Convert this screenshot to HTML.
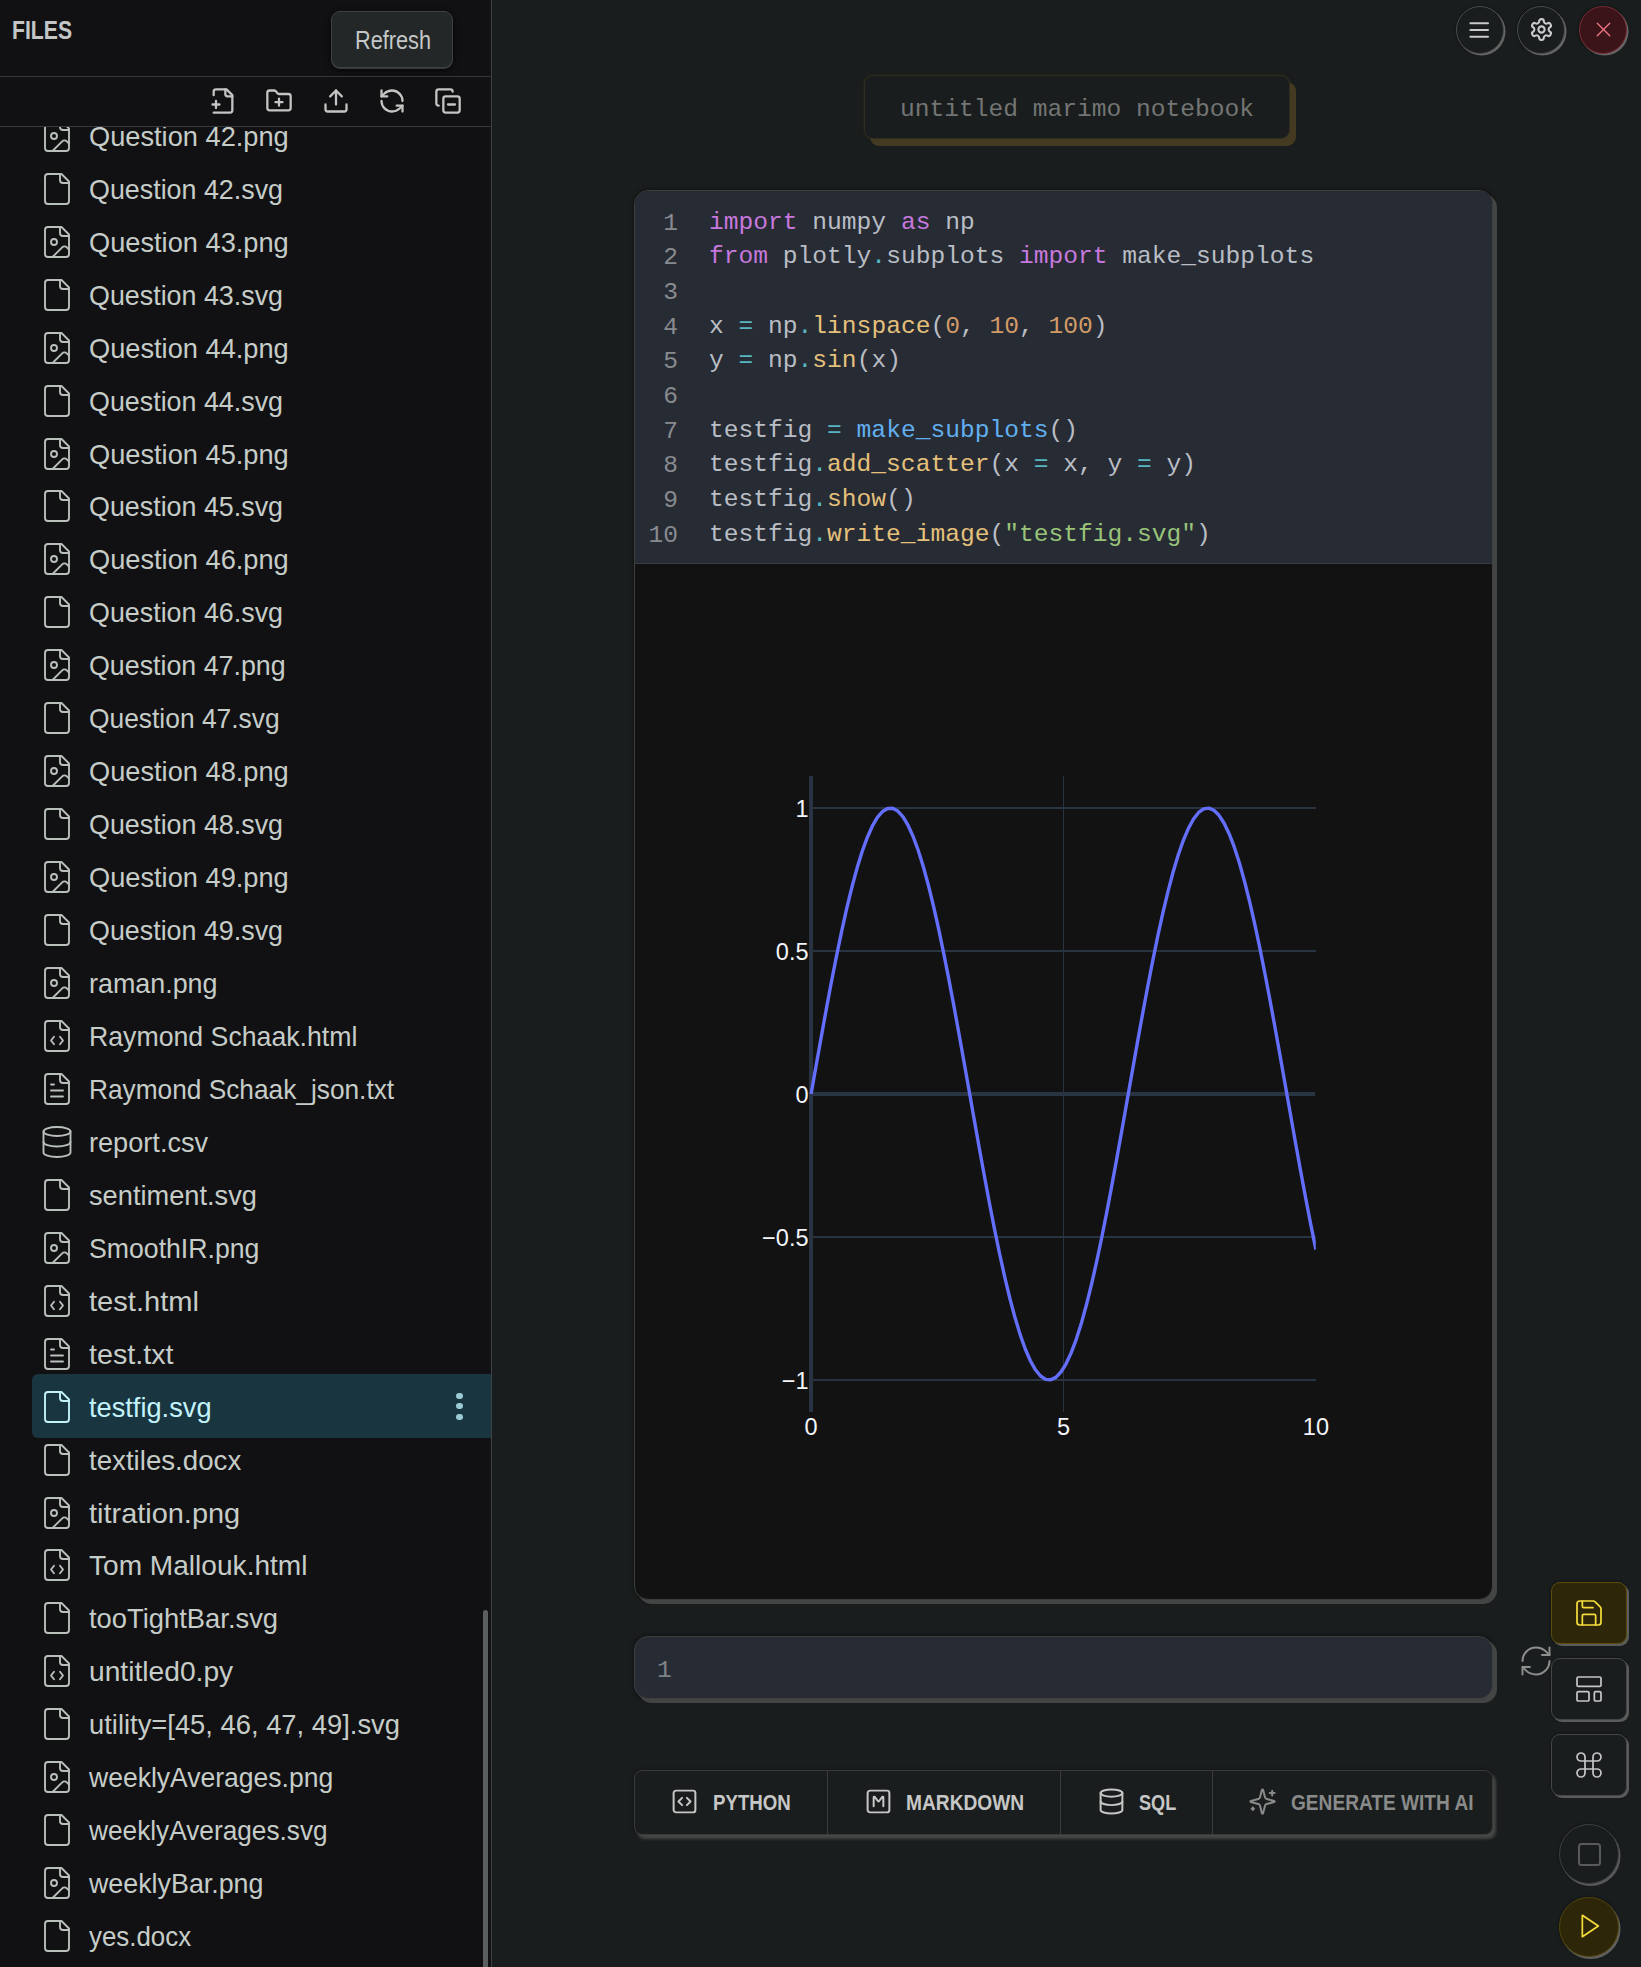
<!DOCTYPE html>
<html><head><meta charset="utf-8"><title>marimo</title>
<style>
html,body{margin:0;padding:0;width:1641px;height:1967px;overflow:hidden;background:#1a1d1d;font-family:"Liberation Sans", sans-serif;}
.a{position:absolute;}
svg{position:absolute;overflow:visible;}
.ic{fill:none;stroke-linecap:round;stroke-linejoin:round;}
.fn{position:absolute;left:89px;white-space:nowrap;font-size:28px;color:#c8c9c6;transform-origin:0 50%;transform:scaleX(.945);height:40px;line-height:40px;}
.mono{font-family:"Liberation Mono", monospace;}
</style></head><body>

<div class="a" style="left:0;top:0;width:491px;height:1967px;background:#111113;border-right:1px solid #3f4244;"></div>
<div class="a" style="left:12px;top:12px;height:36px;line-height:36px;font-size:26px;font-weight:bold;color:#c4c5c7;transform-origin:0 50%;transform:scaleX(.815);">FILES</div>
<div class="a" style="left:0;top:76px;width:491px;height:1px;background:#35393a;"></div>
<div class="a" style="left:0;top:126px;width:491px;height:1px;background:#35393a;"></div>
<svg class="ic" style="left:209.4px;top:86.6px" width="28" height="28" viewBox="0 0 24 24" stroke="#c4c5c3" stroke-width="1.95"><path d="M4 22h14a2 2 0 0 0 2-2V7l-5-5H6a2 2 0 0 0-2 2v3"/><path d="M14 2v4a2 2 0 0 0 2 2h4"/><path d="M3 15h6"/><path d="M6 12v6"/></svg>
<svg class="ic" style="left:265.4px;top:86.6px" width="28" height="28" viewBox="0 0 24 24" stroke="#c4c5c3" stroke-width="1.95"><path d="M12 10v6"/><path d="M9 13h6"/><path d="M20 20a2 2 0 0 0 2-2V8a2 2 0 0 0-2-2h-7.9a2 2 0 0 1-1.69-.9L9.6 3.9A2 2 0 0 0 7.93 3H4a2 2 0 0 0-2 2v13a2 2 0 0 0 2 2Z"/></svg>
<svg class="ic" style="left:322.4px;top:86.6px" width="28" height="28" viewBox="0 0 24 24" stroke="#c4c5c3" stroke-width="1.95"><path d="M21 15v4a2 2 0 0 1-2 2H5a2 2 0 0 1-2-2v-4"/><polyline points="17 8 12 3 7 8"/><line x1="12" x2="12" y1="3" y2="15"/></svg>
<svg class="ic" style="left:378.4px;top:86.6px" width="28" height="28" viewBox="0 0 24 24" stroke="#c4c5c3" stroke-width="1.95"><path d="M21 12a9 9 0 0 0-9-9 9.75 9.75 0 0 0-6.74 2.74L3 8"/><path d="M3 3v5h5"/><path d="M3 12a9 9 0 0 0 9 9 9.75 9.75 0 0 0 6.74-2.74L21 16"/><path d="M16 16h5v5"/></svg>
<svg class="ic" style="left:434.4px;top:86.6px" width="28" height="28" viewBox="0 0 24 24" stroke="#c4c5c3" stroke-width="1.95"><line x1="12" x2="18" y1="15" y2="15"/><rect width="14" height="14" x="8" y="8" rx="2" ry="2"/><path d="M4 16c-1.1 0-2-.9-2-2V4c0-1.1.9-2 2-2h10c1.1 0 2 .9 2 2"/></svg>
<div class="a" style="left:0;top:127px;width:491px;height:1840px;overflow:hidden;">
<svg class="ic" style="left:38.75px;top:-9.20px" width="36" height="36" viewBox="0 0 24 24" stroke="#b9c0bc" stroke-width="1.25"><path d="M15 2H6a2 2 0 0 0-2 2v16a2 2 0 0 0 2 2h12a2 2 0 0 0 2-2V7Z"/><path d="M14 2v4a2 2 0 0 0 2 2h4"/><circle cx="10" cy="12" r="2"/><path d="m20 17-1.296-1.296a2.41 2.41 0 0 0-3.408 0L9 22"/></svg>
<div class="fn" style="top:-10.20px;color:#c6ccc8;transform:scaleX(0.972)">Question 42.png</div>
<svg class="ic" style="left:38.75px;top:43.75px" width="36" height="36" viewBox="0 0 24 24" stroke="#b9c0bc" stroke-width="1.25"><path d="M15 2H6a2 2 0 0 0-2 2v16a2 2 0 0 0 2 2h12a2 2 0 0 0 2-2V7Z"/><path d="M14 2v4a2 2 0 0 0 2 2h4"/></svg>
<div class="fn" style="top:42.75px;color:#c6ccc8;transform:scaleX(0.959)">Question 42.svg</div>
<svg class="ic" style="left:38.75px;top:96.70px" width="36" height="36" viewBox="0 0 24 24" stroke="#b9c0bc" stroke-width="1.25"><path d="M15 2H6a2 2 0 0 0-2 2v16a2 2 0 0 0 2 2h12a2 2 0 0 0 2-2V7Z"/><path d="M14 2v4a2 2 0 0 0 2 2h4"/><circle cx="10" cy="12" r="2"/><path d="m20 17-1.296-1.296a2.41 2.41 0 0 0-3.408 0L9 22"/></svg>
<div class="fn" style="top:95.70px;color:#c6ccc8;transform:scaleX(0.972)">Question 43.png</div>
<svg class="ic" style="left:38.75px;top:149.65px" width="36" height="36" viewBox="0 0 24 24" stroke="#b9c0bc" stroke-width="1.25"><path d="M15 2H6a2 2 0 0 0-2 2v16a2 2 0 0 0 2 2h12a2 2 0 0 0 2-2V7Z"/><path d="M14 2v4a2 2 0 0 0 2 2h4"/></svg>
<div class="fn" style="top:148.65px;color:#c6ccc8;transform:scaleX(0.959)">Question 43.svg</div>
<svg class="ic" style="left:38.75px;top:202.60px" width="36" height="36" viewBox="0 0 24 24" stroke="#b9c0bc" stroke-width="1.25"><path d="M15 2H6a2 2 0 0 0-2 2v16a2 2 0 0 0 2 2h12a2 2 0 0 0 2-2V7Z"/><path d="M14 2v4a2 2 0 0 0 2 2h4"/><circle cx="10" cy="12" r="2"/><path d="m20 17-1.296-1.296a2.41 2.41 0 0 0-3.408 0L9 22"/></svg>
<div class="fn" style="top:201.60px;color:#c6ccc8;transform:scaleX(0.972)">Question 44.png</div>
<svg class="ic" style="left:38.75px;top:255.55px" width="36" height="36" viewBox="0 0 24 24" stroke="#b9c0bc" stroke-width="1.25"><path d="M15 2H6a2 2 0 0 0-2 2v16a2 2 0 0 0 2 2h12a2 2 0 0 0 2-2V7Z"/><path d="M14 2v4a2 2 0 0 0 2 2h4"/></svg>
<div class="fn" style="top:254.55px;color:#c6ccc8;transform:scaleX(0.959)">Question 44.svg</div>
<svg class="ic" style="left:38.75px;top:308.50px" width="36" height="36" viewBox="0 0 24 24" stroke="#b9c0bc" stroke-width="1.25"><path d="M15 2H6a2 2 0 0 0-2 2v16a2 2 0 0 0 2 2h12a2 2 0 0 0 2-2V7Z"/><path d="M14 2v4a2 2 0 0 0 2 2h4"/><circle cx="10" cy="12" r="2"/><path d="m20 17-1.296-1.296a2.41 2.41 0 0 0-3.408 0L9 22"/></svg>
<div class="fn" style="top:307.50px;color:#c6ccc8;transform:scaleX(0.972)">Question 45.png</div>
<svg class="ic" style="left:38.75px;top:361.45px" width="36" height="36" viewBox="0 0 24 24" stroke="#b9c0bc" stroke-width="1.25"><path d="M15 2H6a2 2 0 0 0-2 2v16a2 2 0 0 0 2 2h12a2 2 0 0 0 2-2V7Z"/><path d="M14 2v4a2 2 0 0 0 2 2h4"/></svg>
<div class="fn" style="top:360.45px;color:#c6ccc8;transform:scaleX(0.959)">Question 45.svg</div>
<svg class="ic" style="left:38.75px;top:414.40px" width="36" height="36" viewBox="0 0 24 24" stroke="#b9c0bc" stroke-width="1.25"><path d="M15 2H6a2 2 0 0 0-2 2v16a2 2 0 0 0 2 2h12a2 2 0 0 0 2-2V7Z"/><path d="M14 2v4a2 2 0 0 0 2 2h4"/><circle cx="10" cy="12" r="2"/><path d="m20 17-1.296-1.296a2.41 2.41 0 0 0-3.408 0L9 22"/></svg>
<div class="fn" style="top:413.40px;color:#c6ccc8;transform:scaleX(0.972)">Question 46.png</div>
<svg class="ic" style="left:38.75px;top:467.35px" width="36" height="36" viewBox="0 0 24 24" stroke="#b9c0bc" stroke-width="1.25"><path d="M15 2H6a2 2 0 0 0-2 2v16a2 2 0 0 0 2 2h12a2 2 0 0 0 2-2V7Z"/><path d="M14 2v4a2 2 0 0 0 2 2h4"/></svg>
<div class="fn" style="top:466.35px;color:#c6ccc8;transform:scaleX(0.959)">Question 46.svg</div>
<svg class="ic" style="left:38.75px;top:520.30px" width="36" height="36" viewBox="0 0 24 24" stroke="#b9c0bc" stroke-width="1.25"><path d="M15 2H6a2 2 0 0 0-2 2v16a2 2 0 0 0 2 2h12a2 2 0 0 0 2-2V7Z"/><path d="M14 2v4a2 2 0 0 0 2 2h4"/><circle cx="10" cy="12" r="2"/><path d="m20 17-1.296-1.296a2.41 2.41 0 0 0-3.408 0L9 22"/></svg>
<div class="fn" style="top:519.30px;color:#c6ccc8;transform:scaleX(0.957)">Question 47.png</div>
<svg class="ic" style="left:38.75px;top:573.25px" width="36" height="36" viewBox="0 0 24 24" stroke="#b9c0bc" stroke-width="1.25"><path d="M15 2H6a2 2 0 0 0-2 2v16a2 2 0 0 0 2 2h12a2 2 0 0 0 2-2V7Z"/><path d="M14 2v4a2 2 0 0 0 2 2h4"/></svg>
<div class="fn" style="top:572.25px;color:#c6ccc8;transform:scaleX(0.942)">Question 47.svg</div>
<svg class="ic" style="left:38.75px;top:626.20px" width="36" height="36" viewBox="0 0 24 24" stroke="#b9c0bc" stroke-width="1.25"><path d="M15 2H6a2 2 0 0 0-2 2v16a2 2 0 0 0 2 2h12a2 2 0 0 0 2-2V7Z"/><path d="M14 2v4a2 2 0 0 0 2 2h4"/><circle cx="10" cy="12" r="2"/><path d="m20 17-1.296-1.296a2.41 2.41 0 0 0-3.408 0L9 22"/></svg>
<div class="fn" style="top:625.20px;color:#c6ccc8;transform:scaleX(0.972)">Question 48.png</div>
<svg class="ic" style="left:38.75px;top:679.15px" width="36" height="36" viewBox="0 0 24 24" stroke="#b9c0bc" stroke-width="1.25"><path d="M15 2H6a2 2 0 0 0-2 2v16a2 2 0 0 0 2 2h12a2 2 0 0 0 2-2V7Z"/><path d="M14 2v4a2 2 0 0 0 2 2h4"/></svg>
<div class="fn" style="top:678.15px;color:#c6ccc8;transform:scaleX(0.959)">Question 48.svg</div>
<svg class="ic" style="left:38.75px;top:732.10px" width="36" height="36" viewBox="0 0 24 24" stroke="#b9c0bc" stroke-width="1.25"><path d="M15 2H6a2 2 0 0 0-2 2v16a2 2 0 0 0 2 2h12a2 2 0 0 0 2-2V7Z"/><path d="M14 2v4a2 2 0 0 0 2 2h4"/><circle cx="10" cy="12" r="2"/><path d="m20 17-1.296-1.296a2.41 2.41 0 0 0-3.408 0L9 22"/></svg>
<div class="fn" style="top:731.10px;color:#c6ccc8;transform:scaleX(0.972)">Question 49.png</div>
<svg class="ic" style="left:38.75px;top:785.05px" width="36" height="36" viewBox="0 0 24 24" stroke="#b9c0bc" stroke-width="1.25"><path d="M15 2H6a2 2 0 0 0-2 2v16a2 2 0 0 0 2 2h12a2 2 0 0 0 2-2V7Z"/><path d="M14 2v4a2 2 0 0 0 2 2h4"/></svg>
<div class="fn" style="top:784.05px;color:#c6ccc8;transform:scaleX(0.959)">Question 49.svg</div>
<svg class="ic" style="left:38.75px;top:838.00px" width="36" height="36" viewBox="0 0 24 24" stroke="#b9c0bc" stroke-width="1.25"><path d="M15 2H6a2 2 0 0 0-2 2v16a2 2 0 0 0 2 2h12a2 2 0 0 0 2-2V7Z"/><path d="M14 2v4a2 2 0 0 0 2 2h4"/><circle cx="10" cy="12" r="2"/><path d="m20 17-1.296-1.296a2.41 2.41 0 0 0-3.408 0L9 22"/></svg>
<div class="fn" style="top:837.00px;color:#c6ccc8;transform:scaleX(0.96)">raman.png</div>
<svg class="ic" style="left:38.75px;top:890.95px" width="36" height="36" viewBox="0 0 24 24" stroke="#b9c0bc" stroke-width="1.25"><path d="M15 2H6a2 2 0 0 0-2 2v16a2 2 0 0 0 2 2h12a2 2 0 0 0 2-2V7Z"/><path d="M14 2v4a2 2 0 0 0 2 2h4"/><path d="M10 12.5 8 15l2 2.5"/><path d="m14 12.5 2 2.5-2 2.5"/></svg>
<div class="fn" style="top:889.95px;color:#c6ccc8;transform:scaleX(0.953)">Raymond Schaak.html</div>
<svg class="ic" style="left:38.75px;top:943.90px" width="36" height="36" viewBox="0 0 24 24" stroke="#b9c0bc" stroke-width="1.25"><path d="M15 2H6a2 2 0 0 0-2 2v16a2 2 0 0 0 2 2h12a2 2 0 0 0 2-2V7Z"/><path d="M14 2v4a2 2 0 0 0 2 2h4"/><path d="M10 9H8"/><path d="M16 13H8"/><path d="M16 17H8"/></svg>
<div class="fn" style="top:942.90px;color:#c6ccc8;transform:scaleX(0.938)">Raymond Schaak_json.txt</div>
<svg class="ic" style="left:38.75px;top:996.85px" width="36" height="36" viewBox="0 0 24 24" stroke="#b9c0bc" stroke-width="1.25"><ellipse cx="12" cy="5" rx="9" ry="3"/><path d="M3 5V19A9 3 0 0 0 21 19V5"/><path d="M3 12A9 3 0 0 0 21 12"/></svg>
<div class="fn" style="top:995.85px;color:#c6ccc8;transform:scaleX(0.969)">report.csv</div>
<svg class="ic" style="left:38.75px;top:1049.80px" width="36" height="36" viewBox="0 0 24 24" stroke="#b9c0bc" stroke-width="1.25"><path d="M15 2H6a2 2 0 0 0-2 2v16a2 2 0 0 0 2 2h12a2 2 0 0 0 2-2V7Z"/><path d="M14 2v4a2 2 0 0 0 2 2h4"/></svg>
<div class="fn" style="top:1048.80px;color:#c6ccc8;transform:scaleX(0.972)">sentiment.svg</div>
<svg class="ic" style="left:38.75px;top:1102.75px" width="36" height="36" viewBox="0 0 24 24" stroke="#b9c0bc" stroke-width="1.25"><path d="M15 2H6a2 2 0 0 0-2 2v16a2 2 0 0 0 2 2h12a2 2 0 0 0 2-2V7Z"/><path d="M14 2v4a2 2 0 0 0 2 2h4"/><circle cx="10" cy="12" r="2"/><path d="m20 17-1.296-1.296a2.41 2.41 0 0 0-3.408 0L9 22"/></svg>
<div class="fn" style="top:1101.75px;color:#c6ccc8;transform:scaleX(0.952)">SmoothIR.png</div>
<svg class="ic" style="left:38.75px;top:1155.70px" width="36" height="36" viewBox="0 0 24 24" stroke="#b9c0bc" stroke-width="1.25"><path d="M15 2H6a2 2 0 0 0-2 2v16a2 2 0 0 0 2 2h12a2 2 0 0 0 2-2V7Z"/><path d="M14 2v4a2 2 0 0 0 2 2h4"/><path d="M10 12.5 8 15l2 2.5"/><path d="m14 12.5 2 2.5-2 2.5"/></svg>
<div class="fn" style="top:1154.70px;color:#c6ccc8;transform:scaleX(1.039)">test.html</div>
<svg class="ic" style="left:38.75px;top:1208.65px" width="36" height="36" viewBox="0 0 24 24" stroke="#b9c0bc" stroke-width="1.25"><path d="M15 2H6a2 2 0 0 0-2 2v16a2 2 0 0 0 2 2h12a2 2 0 0 0 2-2V7Z"/><path d="M14 2v4a2 2 0 0 0 2 2h4"/><path d="M10 9H8"/><path d="M16 13H8"/><path d="M16 17H8"/></svg>
<div class="fn" style="top:1207.65px;color:#c6ccc8;transform:scaleX(1.025)">test.txt</div>
<div class="a" style="left:32px;top:1247.00px;width:470px;height:64px;border-radius:6px;background:#193640;"></div>
<div class="a" style="left:456.4px;top:1266.00px;width:6.2px;height:6.2px;border-radius:3.1px;background:#9dcbd5;"></div>
<div class="a" style="left:456.4px;top:1276.30px;width:6.2px;height:6.2px;border-radius:3.1px;background:#9dcbd5;"></div>
<div class="a" style="left:456.4px;top:1286.60px;width:6.2px;height:6.2px;border-radius:3.1px;background:#9dcbd5;"></div>
<svg class="ic" style="left:38.75px;top:1261.60px" width="36" height="36" viewBox="0 0 24 24" stroke="#c4f2fb" stroke-width="1.25"><path d="M15 2H6a2 2 0 0 0-2 2v16a2 2 0 0 0 2 2h12a2 2 0 0 0 2-2V7Z"/><path d="M14 2v4a2 2 0 0 0 2 2h4"/></svg>
<div class="fn" style="top:1260.60px;color:#c4f2fb;transform:scaleX(0.972)">testfig.svg</div>
<svg class="ic" style="left:38.75px;top:1314.55px" width="36" height="36" viewBox="0 0 24 24" stroke="#b9c0bc" stroke-width="1.25"><path d="M15 2H6a2 2 0 0 0-2 2v16a2 2 0 0 0 2 2h12a2 2 0 0 0 2-2V7Z"/><path d="M14 2v4a2 2 0 0 0 2 2h4"/></svg>
<div class="fn" style="top:1313.55px;color:#c6ccc8;transform:scaleX(0.988)">textiles.docx</div>
<svg class="ic" style="left:38.75px;top:1367.50px" width="36" height="36" viewBox="0 0 24 24" stroke="#b9c0bc" stroke-width="1.25"><path d="M15 2H6a2 2 0 0 0-2 2v16a2 2 0 0 0 2 2h12a2 2 0 0 0 2-2V7Z"/><path d="M14 2v4a2 2 0 0 0 2 2h4"/><circle cx="10" cy="12" r="2"/><path d="m20 17-1.296-1.296a2.41 2.41 0 0 0-3.408 0L9 22"/></svg>
<div class="fn" style="top:1366.50px;color:#c6ccc8;transform:scaleX(1.033)">titration.png</div>
<svg class="ic" style="left:38.75px;top:1420.45px" width="36" height="36" viewBox="0 0 24 24" stroke="#b9c0bc" stroke-width="1.25"><path d="M15 2H6a2 2 0 0 0-2 2v16a2 2 0 0 0 2 2h12a2 2 0 0 0 2-2V7Z"/><path d="M14 2v4a2 2 0 0 0 2 2h4"/><path d="M10 12.5 8 15l2 2.5"/><path d="m14 12.5 2 2.5-2 2.5"/></svg>
<div class="fn" style="top:1419.45px;color:#c6ccc8;transform:scaleX(1.003)">Tom Mallouk.html</div>
<svg class="ic" style="left:38.75px;top:1473.40px" width="36" height="36" viewBox="0 0 24 24" stroke="#b9c0bc" stroke-width="1.25"><path d="M15 2H6a2 2 0 0 0-2 2v16a2 2 0 0 0 2 2h12a2 2 0 0 0 2-2V7Z"/><path d="M14 2v4a2 2 0 0 0 2 2h4"/></svg>
<div class="fn" style="top:1472.40px;color:#c6ccc8;transform:scaleX(0.977)">tooTightBar.svg</div>
<svg class="ic" style="left:38.75px;top:1526.35px" width="36" height="36" viewBox="0 0 24 24" stroke="#b9c0bc" stroke-width="1.25"><path d="M15 2H6a2 2 0 0 0-2 2v16a2 2 0 0 0 2 2h12a2 2 0 0 0 2-2V7Z"/><path d="M14 2v4a2 2 0 0 0 2 2h4"/><path d="M10 12.5 8 15l2 2.5"/><path d="m14 12.5 2 2.5-2 2.5"/></svg>
<div class="fn" style="top:1525.35px;color:#c6ccc8;transform:scaleX(1.007)">untitled0.py</div>
<svg class="ic" style="left:38.75px;top:1579.30px" width="36" height="36" viewBox="0 0 24 24" stroke="#b9c0bc" stroke-width="1.25"><path d="M15 2H6a2 2 0 0 0-2 2v16a2 2 0 0 0 2 2h12a2 2 0 0 0 2-2V7Z"/><path d="M14 2v4a2 2 0 0 0 2 2h4"/></svg>
<div class="fn" style="top:1578.30px;color:#c6ccc8;transform:scaleX(0.977)">utility=[45, 46, 47, 49].svg</div>
<svg class="ic" style="left:38.75px;top:1632.25px" width="36" height="36" viewBox="0 0 24 24" stroke="#b9c0bc" stroke-width="1.25"><path d="M15 2H6a2 2 0 0 0-2 2v16a2 2 0 0 0 2 2h12a2 2 0 0 0 2-2V7Z"/><path d="M14 2v4a2 2 0 0 0 2 2h4"/><circle cx="10" cy="12" r="2"/><path d="m20 17-1.296-1.296a2.41 2.41 0 0 0-3.408 0L9 22"/></svg>
<div class="fn" style="top:1631.25px;color:#c6ccc8;transform:scaleX(0.947)">weeklyAverages.png</div>
<svg class="ic" style="left:38.75px;top:1685.20px" width="36" height="36" viewBox="0 0 24 24" stroke="#b9c0bc" stroke-width="1.25"><path d="M15 2H6a2 2 0 0 0-2 2v16a2 2 0 0 0 2 2h12a2 2 0 0 0 2-2V7Z"/><path d="M14 2v4a2 2 0 0 0 2 2h4"/></svg>
<div class="fn" style="top:1684.20px;color:#c6ccc8;transform:scaleX(0.937)">weeklyAverages.svg</div>
<svg class="ic" style="left:38.75px;top:1738.15px" width="36" height="36" viewBox="0 0 24 24" stroke="#b9c0bc" stroke-width="1.25"><path d="M15 2H6a2 2 0 0 0-2 2v16a2 2 0 0 0 2 2h12a2 2 0 0 0 2-2V7Z"/><path d="M14 2v4a2 2 0 0 0 2 2h4"/><circle cx="10" cy="12" r="2"/><path d="m20 17-1.296-1.296a2.41 2.41 0 0 0-3.408 0L9 22"/></svg>
<div class="fn" style="top:1737.15px;color:#c6ccc8;transform:scaleX(0.958)">weeklyBar.png</div>
<svg class="ic" style="left:38.75px;top:1791.10px" width="36" height="36" viewBox="0 0 24 24" stroke="#b9c0bc" stroke-width="1.25"><path d="M15 2H6a2 2 0 0 0-2 2v16a2 2 0 0 0 2 2h12a2 2 0 0 0 2-2V7Z"/><path d="M14 2v4a2 2 0 0 0 2 2h4"/></svg>
<div class="fn" style="top:1790.10px;color:#c6ccc8;transform:scaleX(0.924)">yes.docx</div>
</div>
<div class="a" style="left:483px;top:1610px;width:5px;height:360px;border-radius:3px;background:#5c5f60;"></div>
<div class="a" style="left:331px;top:11px;width:122px;height:57px;box-sizing:border-box;border:1px solid #3d4141;border-radius:9px;background:#232727;box-shadow:0 1px 0 0 #363a3a, 0 2px 7px rgba(0,0,0,.7);"></div>
<div class="a" style="left:355px;top:22px;height:36px;line-height:36px;font-size:26px;color:#c5c8c8;transform-origin:0 50%;transform:scaleX(.835);">Refresh</div>
<div class="a" style="left:1455.5px;top:5.5px;width:48px;height:48px;box-sizing:border-box;border-radius:50%;background:#1a1d1d;border:1px solid #4a4d4e;box-shadow:1.5px 1.5px 0 0 #646665, 0 0 3px rgba(0,0,0,.5);"></div>
<svg class="ic" style="left:0;top:0" width="1641" height="60" stroke="#c9cacb" stroke-width="2"><line x1="1470.4" x2="1488" y1="23.3" y2="23.3"/><line x1="1470.4" x2="1488" y1="30" y2="30"/><line x1="1470.4" x2="1488" y1="36.7" y2="36.7"/></svg>
<div class="a" style="left:1517px;top:5.5px;width:48px;height:48px;box-sizing:border-box;border-radius:50%;background:#1a1d1d;border:1px solid #4a4d4e;box-shadow:1.5px 1.5px 0 0 #646665, 0 0 3px rgba(0,0,0,.5);"></div>
<svg class="ic" style="left:1528.5px;top:17px" width="25" height="25" viewBox="0 0 24 24" stroke="#c9cacb" stroke-width="2"><path d="M12.22 2h-.44a2 2 0 0 0-2 2v.18a2 2 0 0 1-1 1.73l-.43.25a2 2 0 0 1-2 0l-.15-.08a2 2 0 0 0-2.73.73l-.22.38a2 2 0 0 0 .73 2.73l.15.1a2 2 0 0 1 1 1.72v.51a2 2 0 0 1-1 1.74l-.15.09a2 2 0 0 0-.73 2.73l.22.38a2 2 0 0 0 2.73.73l.15-.08a2 2 0 0 1 2 0l.43.25a2 2 0 0 1 1 1.73V20a2 2 0 0 0 2 2h.44a2 2 0 0 0 2-2v-.18a2 2 0 0 1 1-1.73l.43-.25a2 2 0 0 1 2 0l.15.08a2 2 0 0 0 2.73-.73l.22-.39a2 2 0 0 0-.73-2.73l-.15-.08a2 2 0 0 1-1-1.74v-.5a2 2 0 0 1 1-1.74l.15-.09a2 2 0 0 0 .73-2.73l-.22-.38a2 2 0 0 0-2.73-.73l-.15.08a2 2 0 0 1-2 0l-.43-.25a2 2 0 0 1-1-1.73V4a2 2 0 0 0-2-2z"/><circle cx="12" cy="12" r="3"/></svg>
<div class="a" style="left:1579px;top:5.5px;width:48px;height:48px;box-sizing:border-box;border-radius:50%;background:#3a1419;border:1px solid #7a2a36;box-shadow:1.5px 1.5px 0 0 #646665, 0 0 3px rgba(0,0,0,.5);"></div>
<svg class="ic" style="left:1590.5px;top:17px" width="25" height="25" viewBox="0 0 24 24" stroke="#f07884" stroke-width="1.3"><path d="M18 6 6 18"/><path d="m6 6 12 12"/></svg>
<div class="a" style="left:864px;top:75px;width:426px;height:64px;box-sizing:border-box;border:1px solid #302c1f;border-radius:9px;background:#1a1d1d;box-shadow:6px 7px 0 0 #443a22, 0 0 3px rgba(80,70,30,.35);"></div>
<div class="a mono" style="left:864px;top:77.5px;width:426px;height:64px;line-height:64px;text-align:center;font-size:24.6px;color:#737574;">untitled marimo notebook</div>
<div class="a" style="left:634px;top:190px;width:859px;height:1410px;box-sizing:border-box;border:1px solid #3c3f3e;border-radius:14px;background:#121212;box-shadow:4px 4px 0 0 #434544, 0 0 4px rgba(0,0,0,.5);overflow:hidden;">
<div class="a" style="left:0;top:0;width:100%;height:373px;background:#272b34;"></div>
<div class="a" style="left:0;top:372px;width:100%;height:1px;background:#3a3b3c;"></div>
</div>
<div class="a mono" style="left:640px;top:206.50px;width:38px;height:34px;line-height:34px;text-align:right;font-size:24.6px;color:#878a8f;">1</div>
<div class="a mono" style="left:709px;top:205.50px;height:34px;line-height:34px;white-space:pre;font-size:24.6px;"><span style="color:#c678dd">import</span><span style="color:#b9bdc4"> numpy </span><span style="color:#c678dd">as</span><span style="color:#b9bdc4"> np</span></div>
<div class="a mono" style="left:640px;top:241.17px;width:38px;height:34px;line-height:34px;text-align:right;font-size:24.6px;color:#878a8f;">2</div>
<div class="a mono" style="left:709px;top:240.17px;height:34px;line-height:34px;white-space:pre;font-size:24.6px;"><span style="color:#c678dd">from</span><span style="color:#b9bdc4"> plotly</span><span style="color:#56b6c2">.</span><span style="color:#b9bdc4">subplots </span><span style="color:#c678dd">import</span><span style="color:#b9bdc4"> make_subplots</span></div>
<div class="a mono" style="left:640px;top:275.84px;width:38px;height:34px;line-height:34px;text-align:right;font-size:24.6px;color:#878a8f;">3</div>
<div class="a mono" style="left:640px;top:310.51px;width:38px;height:34px;line-height:34px;text-align:right;font-size:24.6px;color:#878a8f;">4</div>
<div class="a mono" style="left:709px;top:309.51px;height:34px;line-height:34px;white-space:pre;font-size:24.6px;"><span style="color:#b9bdc4">x </span><span style="color:#56b6c2">=</span><span style="color:#b9bdc4"> np</span><span style="color:#56b6c2">.</span><span style="color:#e5c07b">linspace</span><span style="color:#b9bdc4">(</span><span style="color:#d19a66">0</span><span style="color:#b9bdc4">, </span><span style="color:#d19a66">10</span><span style="color:#b9bdc4">, </span><span style="color:#d19a66">100</span><span style="color:#b9bdc4">)</span></div>
<div class="a mono" style="left:640px;top:345.18px;width:38px;height:34px;line-height:34px;text-align:right;font-size:24.6px;color:#878a8f;">5</div>
<div class="a mono" style="left:709px;top:344.18px;height:34px;line-height:34px;white-space:pre;font-size:24.6px;"><span style="color:#b9bdc4">y </span><span style="color:#56b6c2">=</span><span style="color:#b9bdc4"> np</span><span style="color:#56b6c2">.</span><span style="color:#e5c07b">sin</span><span style="color:#b9bdc4">(x)</span></div>
<div class="a mono" style="left:640px;top:379.85px;width:38px;height:34px;line-height:34px;text-align:right;font-size:24.6px;color:#878a8f;">6</div>
<div class="a mono" style="left:640px;top:414.52px;width:38px;height:34px;line-height:34px;text-align:right;font-size:24.6px;color:#878a8f;">7</div>
<div class="a mono" style="left:709px;top:413.52px;height:34px;line-height:34px;white-space:pre;font-size:24.6px;"><span style="color:#b9bdc4">testfig </span><span style="color:#56b6c2">=</span> <span style="color:#61afef">make_subplots</span><span style="color:#b9bdc4">()</span></div>
<div class="a mono" style="left:640px;top:449.19px;width:38px;height:34px;line-height:34px;text-align:right;font-size:24.6px;color:#878a8f;">8</div>
<div class="a mono" style="left:709px;top:448.19px;height:34px;line-height:34px;white-space:pre;font-size:24.6px;"><span style="color:#b9bdc4">testfig</span><span style="color:#56b6c2">.</span><span style="color:#e5c07b">add_scatter</span><span style="color:#b9bdc4">(x </span><span style="color:#56b6c2">=</span><span style="color:#b9bdc4"> x, y </span><span style="color:#56b6c2">=</span><span style="color:#b9bdc4"> y)</span></div>
<div class="a mono" style="left:640px;top:483.86px;width:38px;height:34px;line-height:34px;text-align:right;font-size:24.6px;color:#878a8f;">9</div>
<div class="a mono" style="left:709px;top:482.86px;height:34px;line-height:34px;white-space:pre;font-size:24.6px;"><span style="color:#b9bdc4">testfig</span><span style="color:#56b6c2">.</span><span style="color:#e5c07b">show</span><span style="color:#b9bdc4">()</span></div>
<div class="a mono" style="left:640px;top:518.53px;width:38px;height:34px;line-height:34px;text-align:right;font-size:24.6px;color:#878a8f;">10</div>
<div class="a mono" style="left:709px;top:517.53px;height:34px;line-height:34px;white-space:pre;font-size:24.6px;"><span style="color:#b9bdc4">testfig</span><span style="color:#56b6c2">.</span><span style="color:#e5c07b">write_image</span><span style="color:#b9bdc4">(</span><span style="color:#98c379">"testfig.svg"</span><span style="color:#b9bdc4">)</span></div>
<div class="a" style="left:811px;top:807.0px;width:505px;height:2px;background:#283442;"></div>
<div class="a" style="left:811px;top:950.0px;width:505px;height:2px;background:#283442;"></div>
<div class="a" style="left:811px;top:1236.0px;width:505px;height:2px;background:#283442;"></div>
<div class="a" style="left:811px;top:1379.0px;width:505px;height:2px;background:#283442;"></div>
<div class="a" style="left:1062.8px;top:776px;width:1.4px;height:636px;background:#283442;"></div>
<div class="a" style="left:811px;top:1092px;width:504px;height:4px;background:#283442;"></div>
<div class="a" style="left:809px;top:776px;width:4px;height:636px;background:#283442;"></div>
<svg style="left:0;top:0" width="1641" height="1967"><defs><clipPath id="pc"><rect x="700" y="700" width="615.8" height="800"/></clipPath></defs><polyline clip-path="url(#pc)" fill="none" stroke="#636efa" stroke-width="3.4" stroke-linejoin="round" points="811.10,1094.00 816.20,1065.16 821.30,1036.61 826.40,1008.65 831.50,981.56 836.59,955.62 841.69,931.08 846.79,908.21 851.89,887.23 856.99,868.36 862.09,851.79 867.19,837.69 872.29,826.20 877.39,817.44 882.49,811.50 887.58,808.44 892.68,808.29 897.78,811.06 902.88,816.71 907.98,825.18 913.08,836.40 918.18,850.24 923.28,866.57 928.38,885.21 933.48,905.99 938.57,928.68 943.67,953.05 948.77,978.87 953.87,1005.85 958.97,1033.74 964.07,1062.24 969.17,1091.06 974.27,1119.91 979.37,1148.50 984.47,1176.54 989.56,1203.73 994.66,1229.80 999.76,1254.49 1004.86,1277.54 1009.96,1298.73 1015.06,1317.82 1020.16,1334.63 1025.26,1348.99 1030.36,1360.75 1035.46,1369.79 1040.55,1376.02 1045.65,1379.38 1050.75,1379.82 1055.85,1377.36 1060.95,1372.00 1066.05,1363.81 1071.15,1352.87 1076.25,1339.28 1081.35,1323.20 1086.45,1304.79 1091.54,1284.22 1096.64,1261.71 1101.74,1237.50 1106.84,1211.82 1111.94,1184.94 1117.04,1157.13 1122.14,1128.68 1127.24,1099.88 1132.34,1071.02 1137.44,1042.39 1142.53,1014.28 1147.63,986.99 1152.73,960.79 1157.83,935.95 1162.93,912.72 1168.03,891.34 1173.13,872.02 1178.23,854.97 1183.33,840.35 1188.43,828.32 1193.52,819.00 1198.62,812.48 1203.72,808.83 1208.82,808.09 1213.92,810.26 1219.02,815.33 1224.12,823.23 1229.22,833.90 1234.32,847.22 1239.42,863.05 1244.51,881.24 1249.61,901.60 1254.71,923.91 1259.81,947.97 1264.91,973.51 1270.01,1000.28 1275.11,1028.00 1280.21,1056.40 1285.31,1085.18 1290.41,1114.05 1295.50,1142.72 1300.60,1170.89 1305.70,1198.28 1310.80,1224.60 1315.90,1249.59"/></svg>
<div class="a" style="left:700px;top:794.0px;width:108.5px;height:30px;line-height:30px;text-align:right;font-size:23.5px;color:#f2f5fa;">1</div>
<div class="a" style="left:700px;top:937.0px;width:108.5px;height:30px;line-height:30px;text-align:right;font-size:23.5px;color:#f2f5fa;">0.5</div>
<div class="a" style="left:700px;top:1080.0px;width:108.5px;height:30px;line-height:30px;text-align:right;font-size:23.5px;color:#f2f5fa;">0</div>
<div class="a" style="left:700px;top:1223.0px;width:108.5px;height:30px;line-height:30px;text-align:right;font-size:23.5px;color:#f2f5fa;">−0.5</div>
<div class="a" style="left:700px;top:1366.0px;width:108.5px;height:30px;line-height:30px;text-align:right;font-size:23.5px;color:#f2f5fa;">−1</div>
<div class="a" style="left:771.1px;top:1412px;width:80px;height:30px;line-height:30px;text-align:center;font-size:23.5px;color:#f2f5fa;">0</div>
<div class="a" style="left:1023.5px;top:1412px;width:80px;height:30px;line-height:30px;text-align:center;font-size:23.5px;color:#f2f5fa;">5</div>
<div class="a" style="left:1275.9px;top:1412px;width:80px;height:30px;line-height:30px;text-align:center;font-size:23.5px;color:#f2f5fa;">10</div>
<div class="a" style="left:634px;top:1636px;width:859px;height:63px;box-sizing:border-box;border:1px solid #3c3f3e;border-radius:14px;background:#272b34;box-shadow:4px 4px 0 0 #434544, 0 0 4px rgba(0,0,0,.5);"></div>
<div class="a mono" style="left:657px;top:1653.5px;width:20px;height:34px;line-height:34px;font-size:24.6px;color:#7f8287;">1</div>
<div class="a" style="left:634px;top:1770px;width:859px;height:65px;box-sizing:border-box;border:1px solid #383b3a;border-radius:8px;background:#1a1d1d;box-shadow:3px 4px 3px 0 #454746, 0 0 4px rgba(0,0,0,.4);"></div>
<div class="a" style="left:827px;top:1771px;width:1px;height:63px;background:#383b3a;"></div>
<div class="a" style="left:1060px;top:1771px;width:1px;height:63px;background:#383b3a;"></div>
<div class="a" style="left:1212px;top:1771px;width:1px;height:63px;background:#383b3a;"></div>
<svg class="ic" style="left:669.5px;top:1787.25px" width="29" height="29" viewBox="0 0 24 24" stroke="#c6c7c6" stroke-width="1.65"><rect width="18" height="18" x="3" y="3" rx="2"/><path d="m10 9-3 3 3 3"/><path d="m14 15 3-3-3-3"/></svg>
<div class="a" style="left:712.7px;top:1784.5px;height:36px;line-height:36px;font-size:22.5px;font-weight:bold;white-space:nowrap;color:#c6c7c6;transform-origin:0 50%;transform:scaleX(0.829);">PYTHON</div>
<svg class="ic" style="left:863.5px;top:1787.25px" width="29" height="29" viewBox="0 0 24 24" stroke="#c6c7c6" stroke-width="1.65"><rect width="18" height="18" x="3" y="3" rx="2"/><path d="M8 16V8.5a.5.5 0 0 1 .9-.3l2.7 3.599a.5.5 0 0 0 .8 0l2.7-3.6a.5.5 0 0 1 .9.3V16"/></svg>
<div class="a" style="left:906px;top:1784.5px;height:36px;line-height:36px;font-size:22.5px;font-weight:bold;white-space:nowrap;color:#c6c7c6;transform-origin:0 50%;transform:scaleX(0.852);">MARKDOWN</div>
<svg class="ic" style="left:1096.7px;top:1787.25px" width="29" height="29" viewBox="0 0 24 24" stroke="#c6c7c6" stroke-width="1.65"><ellipse cx="12" cy="5" rx="9" ry="3"/><path d="M3 5V19A9 3 0 0 0 21 19V5"/><path d="M3 12A9 3 0 0 0 21 12"/></svg>
<div class="a" style="left:1139px;top:1784.5px;height:36px;line-height:36px;font-size:22.5px;font-weight:bold;white-space:nowrap;color:#c6c7c6;transform-origin:0 50%;transform:scaleX(0.805);">SQL</div>
<svg class="ic" style="left:1248.3px;top:1787.25px" width="29" height="29" viewBox="0 0 24 24" stroke="#898b8a" stroke-width="1.65"><path d="M9.937 15.5A2 2 0 0 0 8.5 14.063l-6.135-1.582a.5.5 0 0 1 0-.962L8.5 9.936A2 2 0 0 0 9.937 8.5l1.582-6.135a.5.5 0 0 1 .963 0L14.063 8.5A2 2 0 0 0 15.5 9.937l6.135 1.581a.5.5 0 0 1 0 .964L15.5 14.063a2 2 0 0 0-1.437 1.437l-1.582 6.135a.5.5 0 0 1-.963 0z"/><path d="M20 3v4"/><path d="M22 5h-4"/><path d="M4 17v2"/><path d="M5 18H3"/></svg>
<div class="a" style="left:1291.3px;top:1784.5px;height:36px;line-height:36px;font-size:22.5px;font-weight:bold;white-space:nowrap;color:#898b8a;transform-origin:0 50%;transform:scaleX(0.849);">GENERATE WITH AI</div>
<div class="a" style="left:1551px;top:1582px;width:76px;height:62px;box-sizing:border-box;border:1px solid #5c4c0c;border-radius:9px;background:#2e2608;box-shadow:2px 2px 0 0 #5a5c5b, 0 0 3px rgba(0,0,0,.5);"></div>
<svg class="ic" style="left:1573px;top:1597px" width="32" height="32" viewBox="0 0 24 24" stroke="#f3dc3c" stroke-width="1.3"><path d="M15.2 3a2 2 0 0 1 1.4.6l3.8 3.8a2 2 0 0 1 .6 1.4V19a2 2 0 0 1-2 2H5a2 2 0 0 1-2-2V5a2 2 0 0 1 2-2z"/><path d="M17 21v-7a1 1 0 0 0-1-1H8a1 1 0 0 0-1 1v7"/><path d="M7 3v4a1 1 0 0 0 1 1h7"/></svg>
<div class="a" style="left:1551px;top:1658px;width:76px;height:62px;box-sizing:border-box;border:1px solid #444748;border-radius:9px;background:#1a1d1d;box-shadow:2px 2px 0 0 #5a5c5b, 0 0 3px rgba(0,0,0,.5);"></div>
<svg class="ic" style="left:1573px;top:1673px" width="32" height="32" viewBox="0 0 24 24" stroke="#c4c5c6" stroke-width="1.3"><rect width="18" height="7" x="3" y="3" rx="1"/><rect width="9" height="7" x="3" y="14" rx="1"/><rect width="5" height="7" x="16" y="14" rx="1"/></svg>
<div class="a" style="left:1551px;top:1734px;width:76px;height:62px;box-sizing:border-box;border:1px solid #444748;border-radius:9px;background:#1a1d1d;box-shadow:2px 2px 0 0 #5a5c5b, 0 0 3px rgba(0,0,0,.5);"></div>
<svg class="ic" style="left:1573px;top:1749px" width="32" height="32" viewBox="0 0 24 24" stroke="#c4c5c6" stroke-width="1.3"><path d="M15 6v12a3 3 0 1 0 3-3H6a3 3 0 1 0 3 3V6a3 3 0 1 0-3 3h12a3 3 0 1 0-3-3"/></svg>
<svg class="ic" style="left:1517.5px;top:1642.5px" width="36" height="36" viewBox="0 0 24 24" stroke="#8d8e8e" stroke-width="1.3"><path d="M21 12a9 9 0 0 0-9-9 9.75 9.75 0 0 0-6.74 2.74L3 8" transform="translate(24,0) scale(-1,1)"/><path d="M21 3v5h-5"/><path d="M3 12a9 9 0 0 0 9 9 9.75 9.75 0 0 0 6.74-2.74L21 16" transform="translate(24,0) scale(-1,1)"/><path d="M3 21v-5h5"/></svg>
<div class="a" style="left:1559px;top:1824px;width:59.5px;height:59.5px;box-sizing:border-box;border-radius:50%;background:#1a1d1d;border:1px solid #3d4144;box-shadow:1.5px 2px 0 0 #575958, 0 0 3px rgba(0,0,0,.5);"></div>
<div class="a" style="left:1578px;top:1843px;width:22.5px;height:22.5px;box-sizing:border-box;border:2px solid #595b5b;border-radius:3.5px;"></div>
<div class="a" style="left:1559px;top:1897px;width:59.5px;height:59.5px;box-sizing:border-box;border-radius:50%;background:#2e2608;border:1px solid #55460c;box-shadow:1.5px 2px 0 0 #5e605f, 0 0 3px rgba(0,0,0,.5);"></div>
<svg class="ic" style="left:1573px;top:1910px" width="32" height="32" viewBox="0 0 24 24" stroke="#f3dc3c" stroke-width="1.3"><polygon points="7 4 19 12 7 20 7 4"/></svg>
</body></html>
